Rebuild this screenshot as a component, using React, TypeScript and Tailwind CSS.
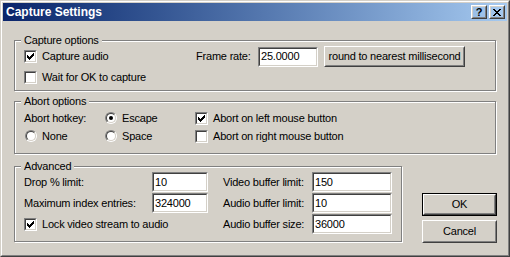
import type { ReactNode } from "react";

const Check = ({ checked }: { checked?: boolean }) => (
  <span className="block w-[13px] h-[13px] shrink-0 border border-t-[#808080] border-l-[#808080] border-b-white border-r-white">
    <span className="block w-full h-full bg-white border border-t-[#404040] border-l-[#404040] border-b-[#d4d0c8] border-r-[#d4d0c8]">
      {checked && (
        <svg width="9" height="9" viewBox="0 0 9 9" shapeRendering="crispEdges">
          <rect x="1" y="3" width="1" height="3" fill="#000" />
          <rect x="2" y="4" width="1" height="3" fill="#000" />
          <rect x="3" y="5" width="1" height="3" fill="#000" />
          <rect x="4" y="4" width="1" height="3" fill="#000" />
          <rect x="5" y="3" width="1" height="3" fill="#000" />
          <rect x="6" y="2" width="1" height="3" fill="#000" />
          <rect x="7" y="1" width="1" height="3" fill="#000" />
        </svg>
      )}
    </span>
  </span>
);

const Radio = ({ checked }: { checked?: boolean }) => (
  <span className="block w-[12px] h-[12px] shrink-0 rounded-full border border-t-[#808080] border-l-[#808080] border-b-white border-r-white">
    <span className="flex items-center justify-center w-full h-full rounded-full bg-white border border-t-[#404040] border-l-[#404040] border-b-[#d4d0c8] border-r-[#d4d0c8]">
      {checked && <span className="block w-[4px] h-[4px] rounded-full bg-black" />}
    </span>
  </span>
);

const Field = ({ value, className }: { value: string; className: string }) => (
  <div className={`h-[20px] shrink-0 border border-t-[#808080] border-l-[#808080] border-b-white border-r-white ${className}`}>
    <div className="h-full bg-white border border-t-[#404040] border-l-[#404040] border-b-[#d4d0c8] border-r-[#d4d0c8] flex items-center pl-px">
      {value}
    </div>
  </div>
);

const Button = ({ children, className, isDefault }: { children: ReactNode; className: string; isDefault?: boolean }) => (
  <div className={`shrink-0 ${isDefault ? "border border-black" : ""} ${className}`}>
    <div className="h-full border border-t-white border-l-white border-b-[#404040] border-r-[#404040]">
      <div className="h-full border border-t-[#d4d0c8] border-l-[#d4d0c8] border-b-[#808080] border-r-[#808080] flex items-center justify-center">
        {children}
      </div>
    </div>
  </div>
);

const Group = ({ label, className, children }: { label: string; className: string; children: ReactNode }) => (
  <div className={`relative shrink-0 border border-[#808080] shadow-[inset_1px_1px_0_#fff,1px_1px_0_#fff] ${className}`}>
    <span className="absolute -top-[7px] left-[6px] px-[3px] bg-[#d4d0c8] leading-[13px]">{label}</span>
    {children}
  </div>
);

const CheckRow = ({ checked, label }: { checked?: boolean; label: string }) => (
  <div className="flex items-center gap-[5px]">
    <Check checked={checked} />
    <span>{label}</span>
  </div>
);

const RadioRow = ({ checked, label }: { checked?: boolean; label: string }) => (
  <div className="flex items-center gap-[5px]">
    <Radio checked={checked} />
    <span>{label}</span>
  </div>
);

export default function App() {
  return (
    <div className="w-[510px] h-[257px] bg-[#d4d0c8] text-black text-[11px] tracking-[-0.2px] font-['Liberation_Sans',Arial,sans-serif] border border-t-[#d4d0c8] border-l-[#d4d0c8] border-b-[#404040] border-r-[#404040]">
      <div className="h-full border border-t-white border-l-white border-b-[#808080] border-r-[#808080] p-px flex flex-col">
        {/* title bar */}
        <div className="h-[18px] shrink-0 flex items-center pl-[3px] pr-[2px] bg-linear-to-r from-[#0a246a] to-[#a6caf0]">
          <span className="text-white font-bold text-[12px] tracking-normal flex-1">Capture Settings</span>
          <div className="flex gap-[2px]">
            <Button className="w-[16px] h-[14px]">
              <span className="font-bold text-[11px] leading-none tracking-normal">?</span>
            </Button>
            <Button className="w-[16px] h-[14px]">
              <svg width="8" height="7" viewBox="0 0 8 7" shapeRendering="crispEdges">
                <path d="M0 0h2v1h-2zM6 0h2v1h-2zM1 1h2v1h-2zM5 1h2v1h-2zM2 2h4v1h-4zM3 3h2v1h-2zM2 4h4v1h-4zM1 5h2v1h-2zM5 5h2v1h-2zM0 6h2v1h-2zM6 6h2v1h-2z" fill="#000" />
              </svg>
            </Button>
          </div>
        </div>

        <div className="pl-[11px] flex flex-col">
          <Group label="Capture options" className="mt-[19px] w-[482px] h-[51px] pt-[5px] pl-[9px]">
            <div className="flex items-center h-[21px]">
              <div className="w-[172px]">
                <CheckRow checked label="Capture audio" />
              </div>
              <span className="w-[62px]">Frame rate:</span>
              <Field value="25.0000" className="w-[60px]" />
              <Button className="ml-[6px] w-[141px] h-[21px]">round to nearest millisecond</Button>
            </div>
            <div className="flex items-center h-[20px]">
              <CheckRow label="Wait for OK to capture" />
            </div>
          </Group>

          <Group label="Abort options" className="mt-[10px] w-[482px] h-[53px] pt-[7px] pl-[9px]">
            <div className="flex items-center h-[18px]">
              <span className="w-[81px]">Abort hotkey:</span>
              <div className="w-[90px]">
                <RadioRow checked label="Escape" />
              </div>
              <CheckRow checked label="Abort on left mouse button" />
            </div>
            <div className="flex items-center h-[18px]">
              <div className="w-[81px] pl-px">
                <RadioRow label="None" />
              </div>
              <div className="w-[90px]">
                <RadioRow label="Space" />
              </div>
              <CheckRow label="Abort on right mouse button" />
            </div>
          </Group>

          <div className="mt-[12px] flex">
            <Group label="Advanced" className="w-[388px] h-[76px] pt-[5px] pl-[9px] flex flex-col gap-px">
              <div className="flex items-center h-[20px]">
                <span className="w-[128px]">Drop % limit:</span>
                <Field value="10" className="w-[56px]" />
                <span className="ml-[15px] w-[89px]">Video buffer limit:</span>
                <Field value="150" className="w-[80px]" />
              </div>
              <div className="flex items-center h-[20px]">
                <span className="w-[128px]">Maximum index entries:</span>
                <Field value="324000" className="w-[56px]" />
                <span className="ml-[15px] w-[89px]">Audio buffer limit:</span>
                <Field value="10" className="w-[80px]" />
              </div>
              <div className="flex items-center h-[20px]">
                <div className="w-[199px]">
                  <CheckRow checked label="Lock video stream to audio" />
                </div>
                <span className="w-[89px]">Audio buffer size:</span>
                <Field value="36000" className="w-[80px]" />
              </div>
            </Group>
            <div className="ml-[20px] pt-[27px] flex flex-col gap-[4px]">
              <Button isDefault className="w-[75px] h-[23px]">OK</Button>
              <Button className="w-[75px] h-[23px]">Cancel</Button>
            </div>
          </div>
        </div>
      </div>
    </div>
  );
}
